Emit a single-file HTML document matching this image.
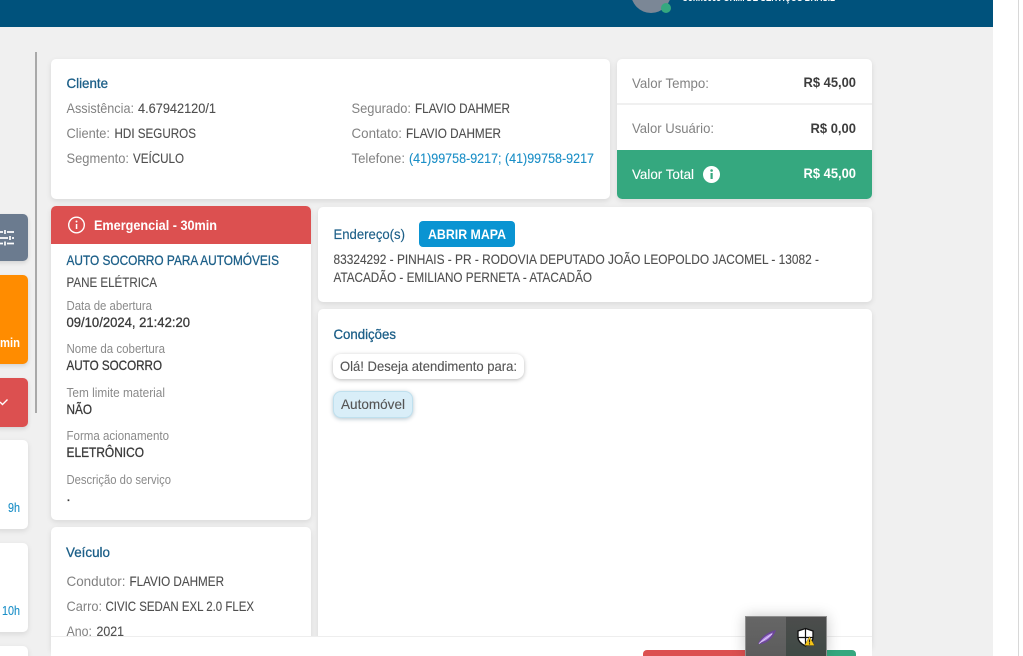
<!DOCTYPE html>
<html lang="pt-BR"><head><meta charset="utf-8"><title>Atendimento</title>
<style>
html,body{margin:0;padding:0;width:1023px;height:656px;overflow:hidden;background:#fff;font-family:"Liberation Sans",sans-serif}
#p{position:relative;width:1023px;height:656px;overflow:hidden;background:#fff}
.a{position:absolute}
.c{position:absolute;background:#fff;border-radius:5px;box-shadow:0 2px 6px rgba(0,0,0,.10)}
svg{position:absolute;left:0;top:0}
text{font-family:"Liberation Sans",sans-serif;font-size:14px;fill:#4f4f4f;stroke:#4f4f4f;stroke-width:.12px;white-space:pre}
.l{fill:#828282;stroke:none}.h{fill:#1c5f88;stroke:#1c5f88;stroke-width:.3px}
.s{font-size:13px;fill:#8a8a8a;stroke:none}.m{stroke:#3a3a3a;stroke-width:.3px;fill:#3a3a3a}
.b{font-weight:bold;fill:#3d3d3d;stroke:none}.w{fill:#fff;font-weight:bold;stroke:none}
</style></head><body>
<div id="p">
<div class="a" style="left:0;top:0;width:993px;height:656px;background:#f0f0f0"></div>
<div class="a" style="left:1018px;top:0;width:1px;height:656px;background:#d8d8d8"></div>
<div class="a" style="left:0;top:0;width:993px;height:27px;background:#00527c;overflow:hidden">
  <div class="a" style="left:631px;top:-27px;width:40px;height:40px;border-radius:50%;background:#7b8796"></div>
  <div class="a" style="left:661px;top:3px;width:10px;height:10px;border-radius:50%;background:#35a87f"></div>
</div>
<div class="a" style="left:35px;top:52px;width:2px;height:361px;background:#a9a9a9"></div>

<div class="a" style="left:-6px;top:214px;width:34px;height:47px;border-radius:5px;background:#6b7b8f;box-shadow:0 2px 4px rgba(0,0,0,.12)"></div>
<div class="a" style="left:-6px;top:275px;width:34px;height:89px;border-radius:5px;background:#ff8c00;box-shadow:0 2px 4px rgba(0,0,0,.12)"></div>
<div class="a" style="left:-6px;top:378px;width:34px;height:49px;border-radius:5px;background:#dc5050;box-shadow:0 2px 4px rgba(0,0,0,.12)"></div>
<div class="c" style="left:-6px;top:440px;width:34px;height:89px"></div>
<div class="c" style="left:-6px;top:543px;width:34px;height:89px"></div>
<div class="c" style="left:-6px;top:646px;width:34px;height:30px"></div>

<div class="c" style="left:51px;top:59px;width:559px;height:140px"></div>
<div class="c" style="left:617px;top:59px;width:255px;height:140px;overflow:hidden">
  <div class="a" style="left:0;top:44px;width:255px;height:2px;background:#f0f0f0"></div>
  <div class="a" style="left:0;top:91px;width:255px;height:49px;background:#35a87f"></div>
</div>
<div class="c" style="left:51px;top:206px;width:260px;height:314px;overflow:hidden">
  <div class="a" style="left:0;top:0;width:260px;height:38px;background:#dc5050"></div>
</div>
<div class="c" style="left:51px;top:527px;width:260px;height:125px"></div>
<div class="c" style="left:318px;top:207px;width:554px;height:95px"></div>
<div class="c" style="left:318px;top:309px;width:554px;height:340px"></div>
<div class="a" style="left:419px;top:221px;width:96px;height:26px;border-radius:4px;background:#0a94d2"></div>
<div class="a" style="left:333px;top:354px;width:191px;height:25px;border-radius:8px;background:#fff;box-shadow:0 1px 4px rgba(0,0,0,.28)"></div>
<div class="a" style="left:333px;top:391px;width:80px;height:27px;border-radius:8px;box-sizing:border-box;border:1px solid #bfe0ee;background:#d9eef8;box-shadow:0 1px 4px rgba(0,60,90,.3)"></div>

<svg width="1023" height="656" viewBox="0 0 1023 656">
<text x="682" y="1" textLength="153" lengthAdjust="spacingAndGlyphs" style="fill:#fff;stroke:none;font-size:11px;font-weight:bold">Conheces GRIM DE SERVIÇOS BRASIL</text>
<g fill="none" stroke="#fff" stroke-width="1.700">
<path d="M0 232h3M7 232h7M0 238h8M12 238h2M0 243.500h3M7 243.500h7M5 230v4M10 236v4M5 241.500v4"/>
</g>
<path d="M0 402l2.500 2.500 5-5" fill="none" stroke="#fff" stroke-width="1.400"/>
<text x="0" y="347" textLength="20" lengthAdjust="spacingAndGlyphs" class="w" style="font-size:13px">min</text>
<text x="8" y="512" textLength="12" lengthAdjust="spacingAndGlyphs" style="fill:#1b8fc7;stroke:#1b8fc7;font-size:13px">9h</text>
<text x="2" y="615" textLength="18" lengthAdjust="spacingAndGlyphs" style="fill:#1b8fc7;stroke:#1b8fc7;font-size:13px">10h</text>

<text x="66.500" y="88" textLength="41.500" lengthAdjust="spacingAndGlyphs" class="h">Cliente</text>
<text x="66.500" y="113" textLength="67.500" lengthAdjust="spacingAndGlyphs" class="l">Assistência:</text>
<text x="138" y="113" textLength="78" lengthAdjust="spacingAndGlyphs">4.67942120/1</text>
<text x="66.500" y="138" textLength="43.500" lengthAdjust="spacingAndGlyphs" class="l">Cliente:</text>
<text x="114.500" y="138" textLength="81.500" lengthAdjust="spacingAndGlyphs">HDI SEGUROS</text>
<text x="66.500" y="163" textLength="62.500" lengthAdjust="spacingAndGlyphs" class="l">Segmento:</text>
<text x="133" y="163" textLength="51" lengthAdjust="spacingAndGlyphs">VEÍCULO</text>
<text x="351.500" y="113" textLength="59.500" lengthAdjust="spacingAndGlyphs" class="l">Segurado:</text>
<text x="415" y="113" textLength="95" lengthAdjust="spacingAndGlyphs">FLAVIO DAHMER</text>
<text x="351.500" y="138" textLength="50.500" lengthAdjust="spacingAndGlyphs" class="l">Contato:</text>
<text x="406" y="138" textLength="95" lengthAdjust="spacingAndGlyphs">FLAVIO DAHMER</text>
<text x="351.500" y="163" textLength="53.500" lengthAdjust="spacingAndGlyphs" class="l">Telefone:</text>
<text x="409" y="163" textLength="185" lengthAdjust="spacingAndGlyphs" style="fill:#1b8fc7;stroke:#1b8fc7">(41)99758-9217; (41)99758-9217</text>

<text x="632" y="88" textLength="77" lengthAdjust="spacingAndGlyphs" class="l">Valor Tempo:</text>
<text x="803.500" y="87" textLength="52.500" lengthAdjust="spacingAndGlyphs" class="b">R$ 45,00</text>
<text x="632" y="133" textLength="82" lengthAdjust="spacingAndGlyphs" class="l">Valor Usuário:</text>
<text x="810.500" y="133" textLength="45.500" lengthAdjust="spacingAndGlyphs" class="b">R$ 0,00</text>
<text x="632" y="179" textLength="62" lengthAdjust="spacingAndGlyphs" style="fill:#fff;stroke:#fff">Valor Total</text>
<circle cx="711.500" cy="174.500" r="8.500" fill="#fff"/>
<rect x="710.500" y="173" width="2.200" height="6" fill="#35a87f"/><circle cx="711.600" cy="170.500" r="1.300" fill="#35a87f"/>
<text x="803.500" y="178" textLength="52.500" lengthAdjust="spacingAndGlyphs" class="w">R$ 45,00</text>

<circle cx="76.500" cy="225" r="7.800" fill="none" stroke="#fff" stroke-width="1.400"/>
<rect x="75.800" y="224" width="1.500" height="5" fill="#fff"/><circle cx="76.500" cy="221.500" r="1" fill="#fff"/>
<text x="94" y="230" textLength="123" lengthAdjust="spacingAndGlyphs" class="w">Emergencial - 30min</text>
<text x="66.500" y="265" textLength="212.500" lengthAdjust="spacingAndGlyphs" class="h">AUTO SOCORRO PARA AUTOMÓVEIS</text>
<text x="66.500" y="287" textLength="90.500" lengthAdjust="spacingAndGlyphs">PANE ELÉTRICA</text>
<text x="66.500" y="310" textLength="85.500" lengthAdjust="spacingAndGlyphs" class="s">Data de abertura</text>
<text x="66.500" y="327" textLength="123.500" lengthAdjust="spacingAndGlyphs" class="m">09/10/2024, 21:42:20</text>
<text x="66.500" y="353" textLength="98.500" lengthAdjust="spacingAndGlyphs" class="s">Nome da cobertura</text>
<text x="66.500" y="370" textLength="95.500" lengthAdjust="spacingAndGlyphs" class="m">AUTO SOCORRO</text>
<text x="66.500" y="397" textLength="98.500" lengthAdjust="spacingAndGlyphs" class="s">Tem limite material</text>
<text x="66.500" y="414" textLength="25.500" lengthAdjust="spacingAndGlyphs" class="m">NÃO</text>
<text x="66.500" y="440" textLength="102.500" lengthAdjust="spacingAndGlyphs" class="s">Forma acionamento</text>
<text x="66.500" y="457" textLength="77.500" lengthAdjust="spacingAndGlyphs" class="m">ELETRÔNICO</text>
<text x="66.500" y="484" textLength="104.500" lengthAdjust="spacingAndGlyphs" class="s">Descrição do serviço</text>
<text x="66.500" y="501" class="m">.</text>

<text x="66" y="557" textLength="44" lengthAdjust="spacingAndGlyphs" class="h">Veículo</text>
<text x="66.500" y="586" textLength="59" lengthAdjust="spacingAndGlyphs" class="l">Condutor:</text>
<text x="129.500" y="586" textLength="94.500" lengthAdjust="spacingAndGlyphs">FLAVIO DAHMER</text>
<text x="66.500" y="611" textLength="35.500" lengthAdjust="spacingAndGlyphs" class="l">Carro:</text>
<text x="105.500" y="611" textLength="148.500" lengthAdjust="spacingAndGlyphs">CIVIC SEDAN EXL 2.0 FLEX</text>
<text x="66.500" y="636" textLength="25.500" lengthAdjust="spacingAndGlyphs" class="l">Ano:</text>
<text x="96.500" y="636" textLength="27.500" lengthAdjust="spacingAndGlyphs">2021</text>

<text x="333.500" y="239" textLength="71.500" lengthAdjust="spacingAndGlyphs" class="h" style="stroke-width:.15px">Endereço(s)</text>
<text x="428" y="239" textLength="78" lengthAdjust="spacingAndGlyphs" class="w">ABRIR MAPA</text>
<text x="333.500" y="264" textLength="485.500" lengthAdjust="spacingAndGlyphs">83324292 - PINHAIS - PR - RODOVIA DEPUTADO JOÃO LEOPOLDO JACOMEL - 13082 -</text>
<text x="333.500" y="282" textLength="258.500" lengthAdjust="spacingAndGlyphs">ATACADÃO - EMILIANO PERNETA - ATACADÃO</text>
<text x="333.500" y="339" textLength="62.500" lengthAdjust="spacingAndGlyphs" class="h">Condições</text>
<text x="340" y="371" textLength="177" lengthAdjust="spacingAndGlyphs" style="fill:#555;stroke:#555">Olá! Deseja atendimento para:</text>
<text x="341" y="409" textLength="64" lengthAdjust="spacingAndGlyphs" style="fill:#555;stroke:#555">Automóvel</text>
</svg>

<div class="a" style="left:51px;top:636px;width:821px;height:20px;background:#fff;border-top:1px solid #eee;box-sizing:border-box;overflow:hidden">
  <div class="a" style="left:592px;top:13px;width:130px;height:12px;border-radius:4px;background:#dc5050"></div>
  <div class="a" style="left:722px;top:13px;width:83px;height:12px;border-radius:4px;background:#35a87f"></div>
</div>

<div class="a" style="left:745px;top:616px;width:82px;height:40px;box-sizing:border-box;border:1px solid #8e8e8e;border-bottom:0;background:linear-gradient(#4c4c4c,#3f4a45);box-shadow:0 0 14px rgba(0,0,0,.22);overflow:hidden">
  <div class="a" style="left:0;top:0;width:40px;height:40px;background:linear-gradient(#666,#5c5c5c)"></div>
  <svg width="80" height="40" viewBox="0 0 80 40" style="left:0;top:0">
    <path d="M12 27C14 21 21 15 30 13 28 20 22 26 15 27Z" fill="#6f3fa8" opacity=".75"/>
    <path d="M14 25C17 21 21 18 27 15.500 25 20 21 23.500 16 25Z" fill="#b48be6"/>
    <path d="M13 26.500L26 17" stroke="#e6d6f8" stroke-width=".8" fill="none"/>
    <path d="M59.500 11.500l7.500 2.500v6.500c0 4-3.500 6.500-7.500 8.500-4-2-7.500-4.500-7.500-8.500V14z" fill="#fff" stroke="#111" stroke-width="1.300"/>
    <path d="M59.500 12v17M52.500 20.500h14" stroke="#111" stroke-width="1.200" fill="none"/>
    <path d="M63.500 19.500l5 9h-10z" fill="#f5c518" stroke="#3f3300" stroke-width=".3"/>
    <path d="M63.500 22.500v3M63.500 26.300v1.200" stroke="#222" stroke-width="1.100" fill="none"/>
  </svg>
</div>
</div>
</body></html>
